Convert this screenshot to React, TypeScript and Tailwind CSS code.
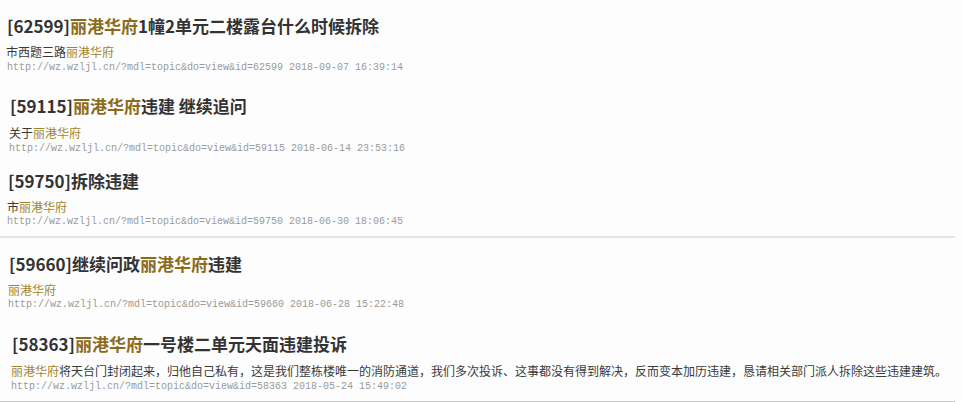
import React from "react";

const G = ({ children, sub }: { children: React.ReactNode; sub?: boolean }) => (
  <span className={sub ? "text-[#a3852c]" : "text-[#8c6c1c]"}>{children}</span>
);

type Item = {
  wrap: string;
  titleCls: string;
  subCls: string;
  urlCls: string;
  title: React.ReactNode;
  sub: React.ReactNode;
  url: string;
};

const items: Item[] = [
  {
    wrap: "pt-[14px] pl-[7px]",
    titleCls: "",
    subCls: "mt-[6px] -ml-[1px]",
    urlCls: "mt-[1px]",
    title: (
      <>
        [62599]<G>丽港华府</G>1幢2单元二楼露台什么时候拆除
      </>
    ),
    sub: (
      <>
        市西题三路<G sub>丽港华府</G>
      </>
    ),
    url: "http://wz.wzljl.cn/?mdl=topic&do=view&id=62599 2018-09-07 16:39:14",
  },
  {
    wrap: "pt-[19px] pl-[10px]",
    titleCls: "",
    subCls: "mt-[7px] -ml-[1px]",
    urlCls: "mt-[1px] -ml-[1px]",
    title: (
      <>
        [59115]<G>丽港华府</G>违建 继续追问
      </>
    ),
    sub: (
      <>
        关于<G sub>丽港华府</G>
      </>
    ),
    url: "http://wz.wzljl.cn/?mdl=topic&do=view&id=59115 2018-06-14 23:53:16",
  },
  {
    wrap: "pt-[13px] pl-[8px]",
    titleCls: "",
    subCls: "mt-[6px] -ml-[1px]",
    urlCls: "mt-0 -ml-[1px]",
    title: <>[59750]拆除违建</>,
    sub: (
      <>
        市<G sub>丽港华府</G>
      </>
    ),
    url: "http://wz.wzljl.cn/?mdl=topic&do=view&id=59750 2018-06-30 18:06:45",
  },
];

const items2: Item[] = [
  {
    wrap: "pt-[14px] pl-[9px]",
    titleCls: "",
    subCls: "mt-[6px] -ml-[1px]",
    urlCls: "mt-0 -ml-[1px]",
    title: (
      <>
        [59660]继续问政<G>丽港华府</G>违建
      </>
    ),
    sub: <G sub>丽港华府</G>,
    url: "http://wz.wzljl.cn/?mdl=topic&do=view&id=59660 2018-06-28 15:22:48",
  },
  {
    wrap: "pt-[20px] pl-[12px]",
    titleCls: "",
    subCls: "mt-[7px] -ml-[1px]",
    urlCls: "mt-[1px] -ml-[1px]",
    title: (
      <>
        [58363]<G>丽港华府</G>一号楼二单元天面违建投诉
      </>
    ),
    sub: (
      <>
        <G sub>丽港华府</G>
        将天台门封闭起来，归他自己私有，这是我们整栋楼唯一的消防通道，我们多次投诉、这事都没有得到解决，反而变本加历违建，恳请相关部门派人拆除这些违建建筑。
      </>
    ),
    url: "http://wz.wzljl.cn/?mdl=topic&do=view&id=58363 2018-05-24 15:49:02",
  },
];

function Entry({ it }: { it: Item }) {
  return (
    <div className={it.wrap}>
      <div
        className={`text-[17px] leading-[24px] font-bold text-[#333333] whitespace-nowrap ${it.titleCls}`}
        style={{ fontFamily: '"Noto Sans CJK SC", sans-serif' }}
      >
        {it.title}
      </div>
      <div
        className={`text-[12px] leading-[16px] text-[#3a3a3a] whitespace-nowrap ${it.subCls}`}
        style={{ fontFamily: '"Noto Sans CJK SC", sans-serif' }}
      >
        {it.sub}
      </div>
      <div
        className={`text-[10px] leading-[14px] text-[#9a9a9a] whitespace-nowrap ${it.urlCls}`}
        style={{ fontFamily: '"Liberation Mono", monospace' }}
      >
        {it.url}
      </div>
    </div>
  );
}

export default function App() {
  return (
    <div className="w-[962px] h-[402px] overflow-hidden bg-[#fdfdfd] flex flex-col">
      {items.map((it, i) => (
        <Entry key={i} it={it} />
      ))}
      <div className="mt-[7px] h-[2px] w-[955px] bg-[#e6e6e6]" />
      {items2.map((it, i) => (
        <Entry key={i} it={it} />
      ))}
      <div className="mt-[7px] h-[2px] w-[955px] bg-[#c9c9c9]" />
    </div>
  );
}
